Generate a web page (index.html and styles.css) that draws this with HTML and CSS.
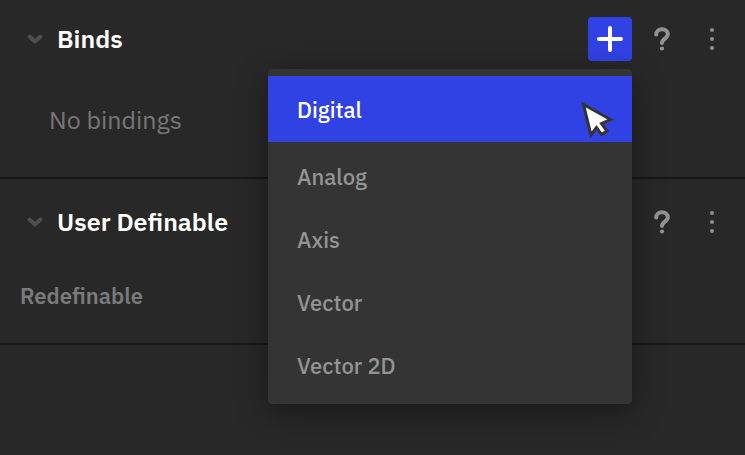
FILE: index.html
```
<!DOCTYPE html>
<html lang="en">
  <head>
    <meta charset="UTF-8" />
    <meta name="viewport" content="width=device-width, initial-scale=1.0" />
    <title>Binds</title>
    <link rel="stylesheet" href="styles.css">
  </head>
  <body>
    <section class="section">
      <header class="section-header">
        <button type="button" class="toggle" aria-label="Collapse Binds">
          <svg width="16" height="10" viewBox="0 0 16 10">
            <path d="M2.5 2.5L8 7.5L13.5 2.5" />
          </svg>
        </button>
        <h2>Binds</h2>
        <div class="add">
          <button type="button" class="add-btn" aria-label="Add bind">
            <svg width="26" height="26" viewBox="0 0 26 26">
              <path d="M13 2v22M2 13h22" />
            </svg>
          </button>
          <!-- dropdown under the add button -->
          <div class="menu">
            <button type="button" class="menu-item active">
              Digital
              <svg class="cursor" width="34" height="38" viewBox="0 0 34 38">
                <path d="M2.5 2.5L29.5 17.5L20.5 21.5L26 29L20.5 32.500L15.500 25.500L10 33Z" />
              </svg>
            </button>
            <button type="button" class="menu-item">Analog</button>
            <button type="button" class="menu-item">Axis</button>
            <button type="button" class="menu-item">Vector</button>
            <button type="button" class="menu-item">Vector 2D</button>
          </div>
        </div>
        <button type="button" class="icon-btn" aria-label="Help">
          <svg width="16" height="24" viewBox="0 0 16 24">
            <path class="hook" d="M2.200 7.500C2.200 4.500 4.800 2.200 8 2.200C11.300 2.200 13.800 4.400 13.800 7.300C13.800 11.500 8 11.800 8 16" />
            <circle cx="8" cy="21.500" r="2.100" />
          </svg>
        </button>
        <button type="button" class="icon-btn" aria-label="More">
          <svg width="6" height="24" viewBox="0 0 6 24">
            <circle cx="3" cy="3" r="2" />
            <circle cx="3" cy="12" r="2" />
            <circle cx="3" cy="21" r="2" />
          </svg>
        </button>
      </header>
      <p class="empty">No bindings</p>
    </section>

    <section class="section">
      <header class="section-header">
        <button type="button" class="toggle" aria-label="Collapse User Definable">
          <svg width="16" height="10" viewBox="0 0 16 10">
            <path d="M2.5 2.5L8 7.5L13.5 2.5" />
          </svg>
        </button>
        <h2>User Definable</h2>
        <button type="button" class="icon-btn" aria-label="Help">
          <svg width="16" height="24" viewBox="0 0 16 24">
            <path class="hook" d="M2.200 7.500C2.200 4.500 4.800 2.200 8 2.200C11.300 2.200 13.800 4.400 13.800 7.300C13.800 11.500 8 11.800 8 16" />
            <circle cx="8" cy="21.500" r="2.100" />
          </svg>
        </button>
        <button type="button" class="icon-btn" aria-label="More">
          <svg width="6" height="24" viewBox="0 0 6 24">
            <circle cx="3" cy="3" r="2" />
            <circle cx="3" cy="12" r="2" />
            <circle cx="3" cy="21" r="2" />
          </svg>
        </button>
      </header>
      <p class="field-label">Redefinable</p>
    </section>
  </body>
</html>
```
FILE: styles.css
```
body {
  min-height: 100vh;
  margin: 0;
  background: #282828;
  color: #fff;
  font-family: "IBM Plex Sans", Roboto, sans-serif;
}

button {
  padding: 0;
  border: none;
  background: none;
  font-family: inherit;
  cursor: pointer;
}

.section {
  padding-top: 21px;
  border-bottom: 2px solid #171717;
}
.section:first-child {
  padding-top: 17px;
}
.section-header {
  display: flex;
  align-items: center;
  height: 44px;
  padding: 0 8px 0 20px;
}
.section-header h2 {
  flex: 1;
  margin: 0 0 0 7px;
  font-size: 25px;
  line-height: 32px;
  font-weight: 600;
}

.toggle {
  display: flex;
  justify-content: center;
  width: 30px;
}
.toggle path {
  fill: none;
  stroke: #4e4e4e;
  stroke-width: 4;
  stroke-linecap: round;
  stroke-linejoin: round;
}

.icon-btn {
  display: flex;
  justify-content: center;
  width: 50px;
}
.add + .icon-btn {
  margin-left: 5px;
}
.icon-btn svg {
  fill: #929292;
}
.icon-btn .hook {
  fill: none;
  stroke: #929292;
  stroke-width: 4;
  stroke-linecap: round;
}

.add {
  position: relative;
}
.add-btn {
  display: flex;
  align-items: center;
  justify-content: center;
  width: 44px;
  height: 44px;
  border-radius: 4px;
  background: #3142e4;
}
.add-btn path {
  stroke: #fff;
  stroke-width: 4;
  stroke-linecap: round;
}

.menu {
  position: absolute;
  top: 52px;
  right: 0;
  z-index: 1;
  width: 364px;
  padding: 7px 0 8px;
  border-radius: 4px;
  background: #343434;
  box-shadow: 0 8px 32px rgba(0, 0, 0, 0.4);
}
.menu-item {
  position: relative;
  display: block;
  width: 100%;
  height: 63px;
  padding: 2px 29px 0;
  color: #949494;
  font-size: 22px;
  line-height: 28px;
  font-weight: 500;
  text-align: left;
}
.menu-item.active {
  height: 66px;
  margin-bottom: 2px;
  background: #3142e4;
  color: #fff;
}

.cursor {
  position: absolute;
  right: 17px;
  bottom: 2px;
}
.cursor path {
  fill: #fff;
  stroke: #333;
  stroke-width: 3;
}

.empty {
  margin: 0;
  padding: 43px 49px 41px;
  color: #777;
  font-size: 25px;
  line-height: 32px;
}
.field-label {
  margin: 0;
  padding: 36px 20px 31px;
  color: #7a7a7a;
  font-size: 22px;
  line-height: 32px;
  font-weight: 600;
}
```
